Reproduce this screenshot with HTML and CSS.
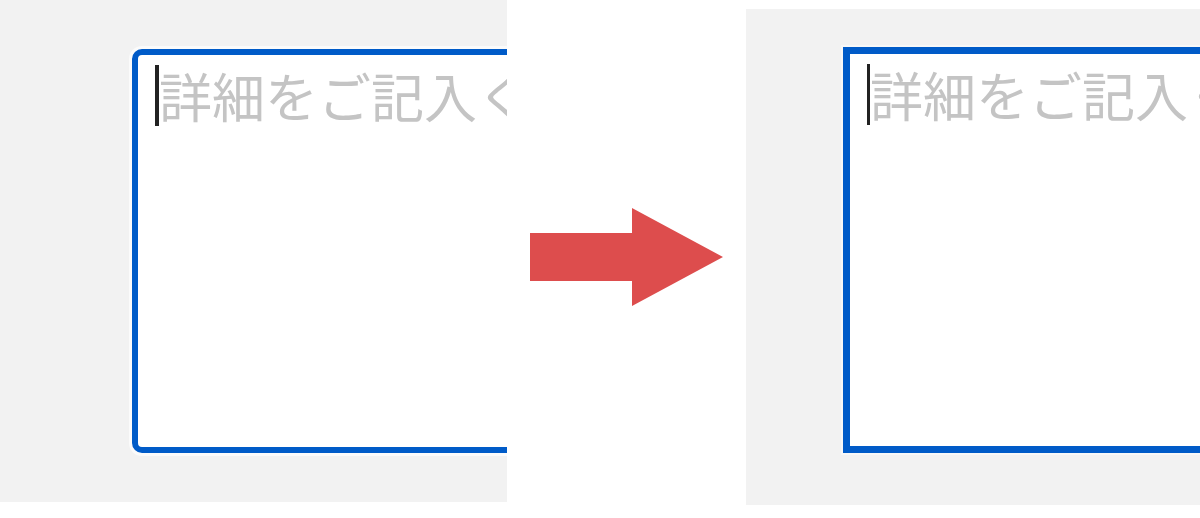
FILE: index.html
```html
<!DOCTYPE html>
<html lang="ja">
<head>
<meta charset="utf-8">
<title>textarea focus</title>
<link rel="stylesheet" href="styles.css">
</head>
<body>
<div class="stage">
  <div class="panel panel-before">
    <div class="field field-rounded">
      <div class="line"><span class="caret caret-thick"></span><span class="placeholder">詳細をご記入ください</span></div>
    </div>
  </div>
  <div class="arrow-col">
    <svg class="arrow" width="193" height="98" viewBox="0 0 193 98">
      <polygon points="0,25 102,25 102,0 193,49 102,98 102,73 0,73" fill="#dd4d4d"/>
    </svg>
  </div>
  <div class="panel panel-after">
    <div class="field field-square">
      <div class="line"><span class="caret caret-thin"></span><span class="placeholder">詳細をご記入ください</span></div>
    </div>
  </div>
</div>
</body>
</html>
```
FILE: styles.css
```css
html, body {
  margin: 0;
  padding: 0;
  background: #ffffff;
}
body {
  width: 1200px;
  height: 518px;
  overflow: hidden;
  font-family: "Noto Sans CJK JP", "Noto Sans", sans-serif;
}
.stage {
  display: flex;
  align-items: flex-start;
  width: 1200px;
}
.panel {
  background: #f2f2f2;
  overflow: hidden;
  box-sizing: border-box;
  flex: none;
}
.panel-before {
  width: 507px;
  height: 502px;
  padding: 49px 0 0 132px;
}
.panel-after {
  width: 454px;
  height: 496px;
  margin-top: 9px;
  padding: 38px 0 0 97px;
}
.field {
  box-sizing: border-box;
  background: #ffffff;
  border-style: solid;
  border-color: #005bc8;
  width: 520px;
  overflow: hidden;
}
.field-rounded {
  height: 404px;
  border-width: 6px;
  border-radius: 10px;
  box-shadow: 0 0 0 3px #fbfbfb;
  padding: 10px 0 0 17px;
}
.field-square {
  height: 406px;
  border-width: 7px;
  border-radius: 0;
  box-shadow: 0 0 0 2px #f8f8f8;
  padding: 10px 0 0 17px;
}
.line {
  display: flex;
  align-items: flex-start;
  white-space: nowrap;
  height: 61px;
}
.caret {
  flex: none;
  height: 61px;
  background: #222222;
}
.caret-thick {
  width: 4px;
}
.caret-thin {
  width: 3px;
}
.placeholder {
  font-size: 53px;
  line-height: 61px;
  color: #c4c4c4;
}
.arrow-col {
  flex: none;
  width: 239px;
  height: 518px;
  box-sizing: border-box;
  padding: 208px 0 0 23px;
}
.arrow {
  display: block;
}
```
